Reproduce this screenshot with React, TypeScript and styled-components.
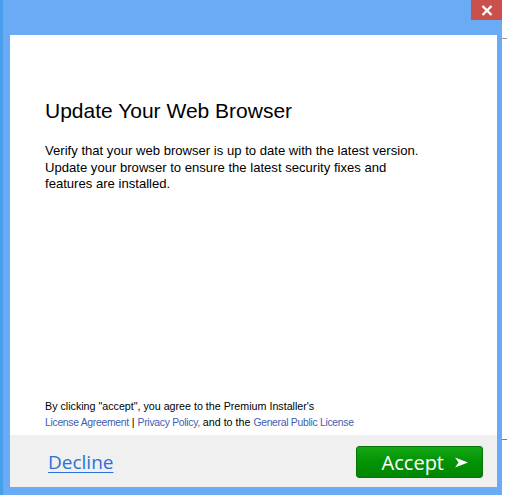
import * as React from 'react';
import styled, { createGlobalStyle } from 'styled-components';

const GlobalStyle = createGlobalStyle`
  html, body {
    margin: 0;
    padding: 0;
    background: #ffffff;
  }
  #root {
    width: 507px;
    height: 495px;
    overflow: hidden;
  }
`;

const Screen = styled.div`
  display: flex;
  width: 507px;
  height: 495px;
`;

const Frame = styled.div`
  width: 499px;
  height: 495px;
  background: #6aabf5;
  border-left: 3px solid #48a0ea;
  display: flex;
  flex-direction: column;
`;

const TitleBar = styled.div`
  height: 35px;
  display: flex;
  justify-content: flex-end;
  align-items: flex-start;
`;

const CloseButton = styled.div`
  width: 31px;
  height: 20px;
  background: #c9504b;
  display: flex;
  align-items: center;
  justify-content: center;
`;

const Window = styled.div`
  flex: 1;
  margin: 0 5px 8px 7px;
  display: flex;
  flex-direction: column;
`;

const Content = styled.div`
  flex: 1;
  background: #ffffff;
  padding: 64px 35px 0 35px;
  display: flex;
  flex-direction: column;
  font-family: "Liberation Sans", Arial, sans-serif;
  color: #000;
`;

const Title = styled.h1`
  margin: 0;
  font-size: 21px;
  line-height: 24px;
  font-weight: normal;
`;

const Message = styled.p`
  margin: 20px 0 0 0;
  font-size: 13.1px;
  line-height: 16.5px;
`;

const Terms = styled.div`
  margin-top: auto;
  padding-bottom: 4px;
  font-size: 10.7px;
  line-height: 16px;
`;

const TermsLink = styled.span`
  color: #3f5db0;
  font-size: 10.4px;
  letter-spacing: -0.3px;
`;

const Footer = styled.div`
  height: 52px;
  background: #f0f0f0;
  display: flex;
  align-items: center;
  justify-content: space-between;
  padding: 0 14px 0 38px;
  font-family: "Open Sans", "Noto Sans", sans-serif;
`;

const DeclineLink = styled.span`
  color: #2a72d9;
  font-size: 19px;
  text-decoration: underline;
  text-underline-offset: 3px;
  margin-top: 2px;
`;

const AcceptButton = styled.div`
  width: 127px;
  height: 32px;
  margin-top: 2px;
  box-sizing: border-box;
  border: 1px solid #087408;
  border-radius: 3px;
  background: linear-gradient(#14a814, #049406 45%, #008500);
  color: #ffffff;
  font-size: 20px;
  display: flex;
  align-items: center;
  justify-content: flex-end;
  gap: 11px;
  padding-right: 14px;
`;

const RightEdge = styled.div`
  flex: 1;
  background: #ffffff;
  display: flex;
  flex-direction: column;
`;

const EdgeLine = styled.div<{ $top: number; $color: string }>`
  margin-top: ${p => p.$top}px;
  height: 1px;
  background: ${p => p.$color};
`;

export default function App(): JSX.Element {
  return (
    <Screen>
      <GlobalStyle />
      <Frame>
        <TitleBar>
          <CloseButton>
            <svg width="12" height="11" viewBox="0 0 12 11">
              <path d="M1.5 1 L10.5 10 M10.5 1 L1.5 10" stroke="#fff" strokeWidth="2.4" />
            </svg>
          </CloseButton>
        </TitleBar>
        <Window>
          <Content>
            <Title>Update Your Web Browser</Title>
            <Message>
              Verify that your web browser is up to date with the latest version.
              <br />
              Update your browser to ensure the latest security fixes and
              <br />
              features are installed.
            </Message>
            <Terms>
              By clicking "accept", you agree to the Premium Installer's
              <br />
              <TermsLink>License Agreement</TermsLink> | <TermsLink>Privacy Policy,</TermsLink> and to the{' '}
              <TermsLink>General Public License</TermsLink>
            </Terms>
          </Content>
          <Footer>
            <DeclineLink>Decline</DeclineLink>
            <AcceptButton>
              <span>Accept</span>
              <svg width="13" height="11" viewBox="0 0 13 11">
                <path d="M0 0.5 L13 5.5 L0 10.5 L3.5 5.5 Z" fill="#fff" />
              </svg>
            </AcceptButton>
          </Footer>
        </Window>
      </Frame>
      <RightEdge>
        <EdgeLine $top={38} $color="#9a9a9a" />
        <EdgeLine $top={400} $color="#3c8fe0" />
      </RightEdge>
    </Screen>
  );
}
